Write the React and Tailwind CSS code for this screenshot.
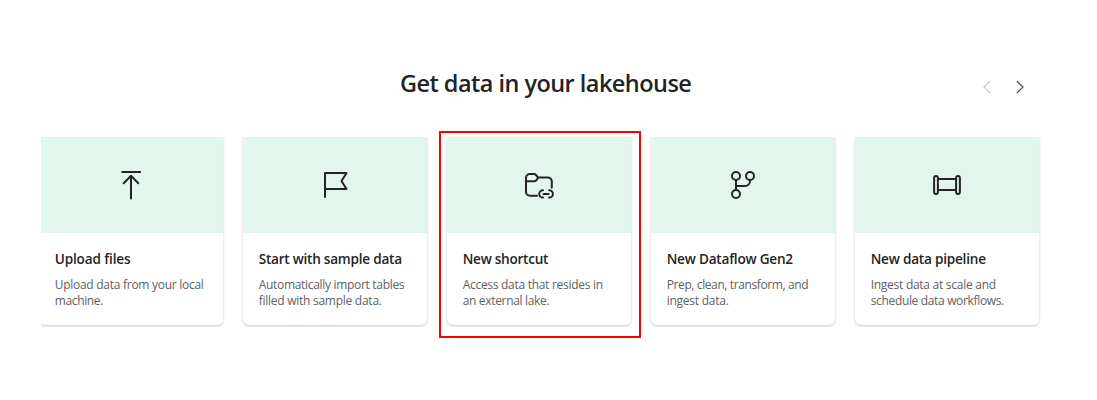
function Icon({ children }) {
  return (
    <svg width="32" height="32" viewBox="0 0 32 32" fill="none" stroke="#242424" strokeWidth="2" strokeLinecap="round" strokeLinejoin="round">
      {children}
    </svg>
  );
}

const cards = [
  {
    title: "Upload files",
    titleClass: "tracking-[-0.14px]",
    lines: [
      ["Upload data from your local", "tracking-[-0.27px]"],
      ["machine.", "tracking-[-0.36px]"],
    ],
    icon: <path d="M7.2 3h18M16 7v22.5M8.7 14.2 16 6.8l7.3 7.4" />,
  },
  {
    title: "Start with sample data",
    titleClass: "tracking-[-0.25px]",
    lines: [
      ["Automatically import tables", "tracking-[-0.31px]"],
      ["filled with sample data.", "tracking-[-0.26px]"],
    ],
    icon: <path d="M6 28V4h21.5l-5 8 5 8H6" />,
  },
  {
    title: "New shortcut",
    titleClass: "tracking-[-0.27px]",
    lines: [
      ["Access data that resides in", "tracking-[-0.29px]"],
      ["an external lake.", "tracking-[-0.33px]"],
    ],
    icon: (
      <>
        <path d="M14 26.7H7a4 4 0 0 1-4-4V9a4 4 0 0 1 4-4h3.8a3 3 0 0 1 2.2 1l2.2 2.6H25a3.8 3.8 0 0 1 3.8 3.8V18.5M3 12.3h8a3 3 0 0 0 2.2-1l2-2.7" />
        <path d="M20 21.3h-.2a3.6 3.6 0 0 0 0 7.2h.2M26.1 21.3h.2a3.6 3.6 0 0 1 0 7.2h-.2M20.5 24.9h5.1" />
      </>
    ),
  },
  {
    title: "New Dataflow Gen2",
    titleClass: "tracking-[-0.22px]",
    lines: [
      ["Prep, clean, transform, and", "tracking-[-0.39px]"],
      ["ingest data.", "tracking-[-0.24px]"],
    ],
    icon: (
      <>
        <circle cx="9" cy="7" r="4" />
        <circle cx="23" cy="7" r="4" />
        <circle cx="9" cy="25" r="4" />
        <path d="M9 11v10M9 17h9a5 5 0 0 0 5-5v-1" />
      </>
    ),
  },
  {
    title: "New data pipeline",
    titleClass: "tracking-[-0.22px]",
    lines: [
      ["Ingest data at scale and", "tracking-[-0.27px]"],
      ["schedule data workflows.", "tracking-[-0.34px]"],
    ],
    icon: (
      <>
        <rect x="3.1" y="7" width="3.8" height="18" rx="1.9" />
        <rect x="25.1" y="7" width="3.8" height="18" rx="1.9" />
        <path d="M7 10h18M7 21h18" />
      </>
    ),
  },
];

function Card({ title, titleClass, lines, icon }) {
  return (
    <article className="h-[188px] w-[184px] shrink-0 rounded-b-[6px] bg-white shadow-[0_0_2px_rgba(0,0,0,0.08),0_2px_3px_rgba(0,0,0,0.15)]">
      <div className="flex h-24 items-center justify-center bg-[#e3f6ed]">
        <Icon>{icon}</Icon>
      </div>
      <div className="px-[15.7px] pt-4">
        <h2 className={"whitespace-nowrap text-[13.6px] leading-5 font-semibold text-[#242424] " + titleClass}>{title}</h2>
        <div className="mt-2 text-[12px] leading-4 text-[#616161]">
          {lines.map(([text, cls]) => (
            <p key={text} className={"whitespace-nowrap " + cls}>{text}</p>
          ))}
        </div>
      </div>
    </article>
  );
}

export default function App() {
  return (
    <main className="h-[400px] w-[1097px] overflow-hidden bg-white font-['Open_Sans','Noto_Sans',sans-serif]">
      <header className="flex h-[137px] items-start justify-between pt-[67px] pr-[71px] pl-[400px]">
        <h1 className="whitespace-nowrap text-[23.5px] leading-8 font-semibold tracking-[-0.54px] text-[#242424]">Get data in your lakehouse</h1>
        <nav className="flex gap-[21px] pt-[13px]">
          <button aria-label="Previous" className="h-[14px] w-3">
            <svg width="12" height="14" viewBox="0 0 12 14" fill="none" stroke="#c4c4c4" strokeWidth="1.1">
              <path d="M9.2 1.2 3 7.1 9.2 13" />
            </svg>
          </button>
          <button aria-label="Next" className="h-[14px] w-3">
            <svg width="12" height="14" viewBox="0 0 12 14" fill="none" stroke="#505050" strokeWidth="1.2">
              <path d="M2.8 1.2 9 7.1 2.8 13" />
            </svg>
          </button>
        </nav>
      </header>
      <section className="relative ml-[41px] w-[1000px]">
        <div className="h-[190px] overflow-hidden">
          <div className="-ml-[2px] flex gap-5">
            {cards.map((card) => (
              <Card key={card.title} {...card} />
            ))}
          </div>
        </div>
        <div className="pointer-events-none absolute -top-[6px] left-[398px] h-[207px] w-[202px] border-2 border-[#ff0000]" />
      </section>
    </main>
  );
}
